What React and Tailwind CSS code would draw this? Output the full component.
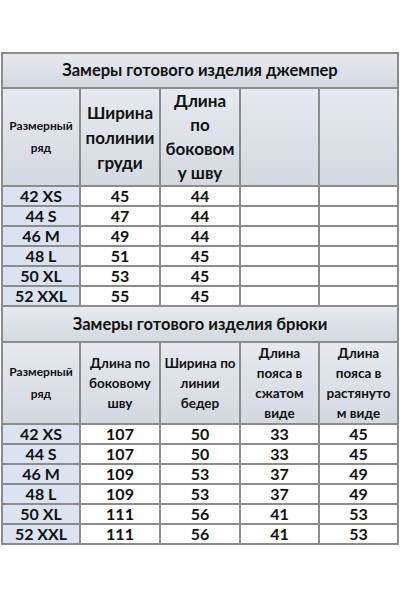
import React from "react";

const jumper = [
  ["42 XS", "45", "44"],
  ["44 S", "47", "44"],
  ["46 M", "49", "44"],
  ["48 L", "51", "45"],
  ["50 XL", "53", "45"],
  ["52 XXL", "55", "45"],
];

const pants = [
  ["42 XS", "107", "50", "33", "45"],
  ["44 S", "107", "50", "33", "45"],
  ["46 M", "109", "53", "37", "49"],
  ["48 L", "109", "53", "37", "49"],
  ["50 XL", "111", "56", "41", "53"],
  ["52 XXL", "111", "56", "41", "53"],
];

const head = "bg-gradient-to-b from-[#e6e9f0] to-[#d4d8e0] flex items-center justify-center text-center";
const cell = "bg-white flex items-center justify-center text-[16px] font-bold leading-none h-[18px]";
const size = "bg-[#dbe3f3] flex items-center justify-center text-[16px] font-bold leading-none h-[18px]";

const App = () => {
  return (
    <div
      className="w-[400px] h-[600px] bg-white pt-[52px] pl-[1px] text-[#111]"
      style={{ fontFamily: 'Lato, "Open Sans", sans-serif' }}
    >
      <div className="w-[398px] bg-[#8c8c8c] p-[2px] grid grid-cols-[76px_78px_78px_77px_77px] gap-[2px]">
        {/* джемпер */}
        <div className={`${head} col-span-5 h-[33px] text-[16.5px] font-bold`}>
          Замеры готового изделия джемпер
        </div>
        <div className={`${head} h-[96px] text-[12px] font-bold leading-[22px]`}>
          Размерный<br />ряд
        </div>
        <div className={`${head} h-[96px] text-[17px] font-bold leading-[25px]`}>
          Ширина<br />полинии<br />груди
        </div>
        <div className={`${head} h-[96px] text-[17px] font-bold leading-[24px]`}>
          Длина<br />по<br />боковом<br />у шву
        </div>
        <div className={`${head} h-[96px]`} />
        <div className={`${head} h-[96px]`} />
        {jumper.map((r) => (
          <React.Fragment key={r[0]}>
            <div className={size}>{r[0]}</div>
            <div className={cell}>{r[1]}</div>
            <div className={cell}>{r[2]}</div>
            <div className={cell} />
            <div className={cell} />
          </React.Fragment>
        ))}

        {/* брюки */}
        <div className={`${head} col-span-5 h-[34px] text-[16.5px] font-bold`}>
          Замеры готового изделия брюки
        </div>
        <div className={`${head} h-[80px] text-[12px] font-bold leading-[22px]`}>
          Размерный<br />ряд
        </div>
        <div className={`${head} h-[80px] text-[13.5px] font-bold leading-[20px]`}>
          Длина по<br />боковому<br />шву
        </div>
        <div className={`${head} h-[80px] text-[13.5px] font-bold leading-[20px]`}>
          Ширина по<br />линии<br />бедер
        </div>
        <div className={`${head} h-[80px] text-[13.5px] font-bold leading-[20px]`}>
          Длина<br />пояса в<br />сжатом<br />виде
        </div>
        <div className={`${head} h-[80px] text-[13.5px] font-bold leading-[20px]`}>
          Длина<br />пояса в<br />растянуто<br />м виде
        </div>
        {pants.map((r) => (
          <React.Fragment key={r[0]}>
            <div className={size}>{r[0]}</div>
            <div className={cell}>{r[1]}</div>
            <div className={cell}>{r[2]}</div>
            <div className={cell}>{r[3]}</div>
            <div className={cell}>{r[4]}</div>
          </React.Fragment>
        ))}
      </div>
    </div>
  );
};

export default App;
